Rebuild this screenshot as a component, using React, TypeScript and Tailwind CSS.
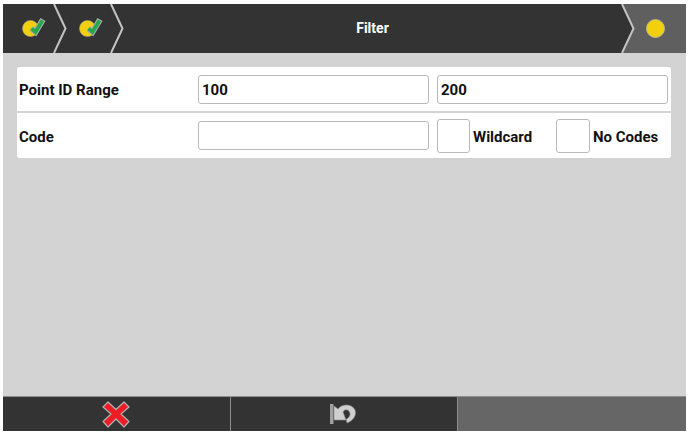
const labelFont = "font-['Roboto',sans-serif] font-bold text-[15px] text-[#111]";

function CheckIcon() {
  return (
    <svg width="24" height="24" viewBox="0 0 24 24" className="overflow-visible">
      <circle cx="9.5" cy="11.5" r="8" fill="#f2d00e" stroke="#a8a68a" strokeWidth="0.6" />
      <path d="M10.5 11.5 L14.5 15 L22 2.5" fill="none" stroke="#a9a9a9" strokeWidth="6" />
      <path d="M10.5 11.5 L14.5 15 L21.5 3.5" fill="none" stroke="#25a84a" strokeWidth="3.6" />
    </svg>
  );
}

function Chevron() {
  return (
    <svg width="14" height="49" viewBox="0 0 14 49" className="shrink-0">
      <path d="M1 0 L12.5 24.5 L1 49" fill="none" stroke="#c4c4c4" strokeWidth="2" />
    </svg>
  );
}

function CrossIcon() {
  return (
    <svg width="28" height="28" viewBox="0 0 28 28">
      <path
        d="M6 2 L14 9.5 L22 2 L27 7 L19 14 L27 21.5 L22 27 L14 19 L6 27 L1 21.5 L9 14 L1 7 Z"
        fill="#ee1c25"
        stroke="#b0b0b0"
        strokeWidth="1.2"
        strokeLinejoin="round"
      />
    </svg>
  );
}

function UndoIcon() {
  return (
    <svg width="28" height="22" viewBox="0 0 28 22">
      <rect x="1" y="1" width="3.5" height="20" fill="#a0a0a0" />
      <path d="M5 3 L9 6 C13 0.5 23 0.5 26 7 C28 12 24 18 18 20 L17 16.5 C20 15 22 12 20.5 9 C19 6 15.5 6 14 9 L17 17 L5 17 Z" fill="#cfcfcf" stroke="#8c8c8c" strokeWidth="0.6" />
    </svg>
  );
}

function Box({ className }: { className: string }) {
  return <div className={`bg-white border border-[#b9b9b9] rounded-[3px] ${className}`} />;
}

function Value({ children }: { children: string }) {
  return (
    <div className={`flex h-[29px] w-[231px] items-center rounded-[3px] border border-[#b9b9b9] bg-white pl-[3px] pt-[1px] ${labelFont}`}>
      {children}
    </div>
  );
}

export default function App() {
  return (
    <div className="flex h-[433px] w-[688px] flex-col bg-white pt-[4px] pb-[2px] pl-[3px] pr-[2px]">
      <header className="flex h-[49px] shrink-0 items-center bg-[#333333]">
        <div className="flex w-[50px] justify-center pl-[10px]"><CheckIcon /></div>
        <Chevron />
        <div className="flex w-[43px] justify-center pl-[3px]"><CheckIcon /></div>
        <Chevron />
        <h1 className="flex-1 text-center font-['Roboto',sans-serif] text-[14px] font-bold text-white">Filter</h1>
        <div className="relative flex h-full w-[65px] items-center justify-end bg-[#5f5f5f] pr-[21px]">
          {/* dark point of the header reaching into the grey cap */}
          <svg width="14" height="49" viewBox="0 0 14 49" className="absolute left-0 top-0">
            <path d="M0 0 L1 0 L12.5 24.5 L1 49 L0 49 Z" fill="#333333" />
            <path d="M1 0 L12.5 24.5 L1 49" fill="none" stroke="#c4c4c4" strokeWidth="2" />
          </svg>
          <div className="h-[19px] w-[19px] rounded-full border border-[#bdb98a] bg-[#f2d00e]" />
        </div>
      </header>

      <main className="flex-1 bg-[#d3d3d3] px-[14px] pt-[14px]">
        <div className={`w-[654px] rounded-[3px] bg-white ${labelFont}`}>
          <div className="flex h-[46px] items-start border-b-2 border-[#d3d3d3] pt-[8px]">
            <span className="flex h-[29px] w-[181px] items-center pl-[2px] pt-[1px]">Point ID Range</span>
            <Value>100</Value>
            <div className="w-[8px]" />
            <Value>200</Value>
          </div>
          <div className="flex h-[45px] items-center">
            <span className="w-[181px] pl-[2px] pt-[3px]">Code</span>
            <Value>{""}</Value>
            <Box className="ml-[8px] h-[34px] w-[33px]" />
            <span className="ml-[3px] w-[83px] pt-[3px]">Wildcard</span>
            <Box className="h-[34px] w-[34px]" />
            <span className="ml-[3px] pt-[3px]">No Codes</span>
          </div>
        </div>
      </main>

      <footer className="flex h-[35px] shrink-0 border-t border-[#8e8e8e] bg-[#333333]">
        <div className="flex w-[228px] items-center justify-center border-r border-[#8e8e8e] pr-[2px]"><CrossIcon /></div>
        <div className="flex w-[227px] items-center justify-center border-r border-[#8e8e8e] pr-[2px]"><UndoIcon /></div>
        <div className="flex-1 bg-[#666666]" />
      </footer>
    </div>
  );
}
